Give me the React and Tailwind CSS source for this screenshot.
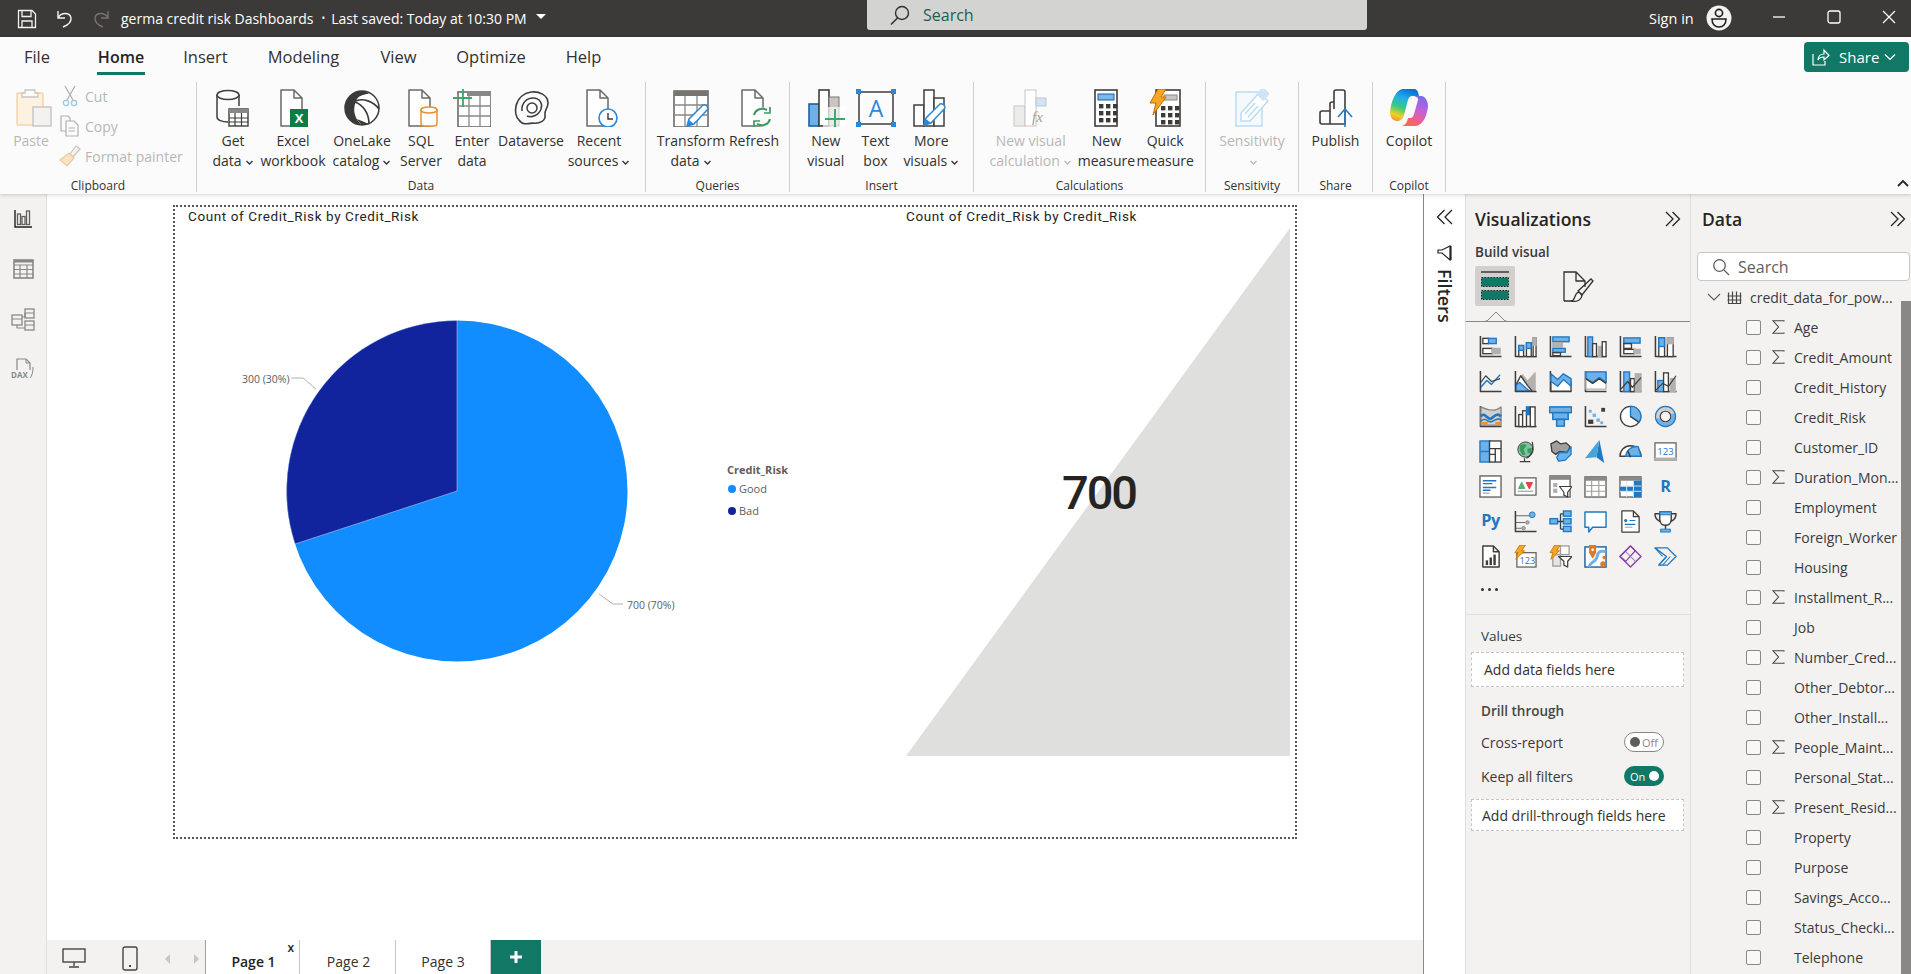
import React from "react";

const D = "#3f3e3c", B = "#1f78c1", L = "#6eb0e8", G = "#b3b0ad", W = "#ffffff", O = "#e8912d", GR = "#3c9a5f";

const R = (x, y, w, h, f = W, s = D, sw = 1.4) => <rect x={x} y={y} width={w} height={h} fill={f} stroke={s} strokeWidth={sw} />;
const P = (d, f = "none", s = D, sw = 1.4) => <path d={d} fill={f} stroke={s} strokeWidth={sw} strokeLinejoin="round" />;
const A = () => P("M1.5 1V22.5H23.5", "none", D, 1.6);

const Ico = ({ w = 38, h = 38, vb, children, className = "" }) => (
  <svg width={w} height={h} viewBox={vb || `0 0 ${w} ${h}`} className={`shrink-0 ${className}`}>{children}</svg>
);

const Chev = ({ c = "#3b3a39" }) => (
  <svg width="9" height="9" viewBox="0 0 9 9" className="inline-block ml-[3px] align-[-1px]">
    <path d="M1.5 3L4.5 6L7.5 3" fill="none" stroke={c} strokeWidth="1.3" />
  </svg>
);

const Doc = ({ c = D }) => P("M7 1H20L28 9V37H7Z M20 1V9H28", W, c, 1.5);

const GetData = () => (
  <Ico><path d="M3 6V28C3 31 8 33 14 33M25 6V17" fill="none" stroke={D} strokeWidth="1.5" /><ellipse cx="14" cy="6" rx="11" ry="4.6" fill="none" stroke={D} strokeWidth="1.5" />
    {R(15, 20, 19, 17, W, D, 1.4)}<rect x="15" y="20" width="19" height="4" fill="#8a8886" /><path d="M15 29H34M15 33H34M21 24V37M27.5 24V37" stroke={D} strokeWidth="1.2" /></Ico>
);
const Excel = () => (
  <Ico><Doc c="#6b6a68" /><rect x="16" y="20" width="18" height="18" fill="#107c41" /><text x="25" y="34" textAnchor="middle" fontSize="13" fontWeight="700" fill="#fff" fontFamily="Open Sans">X</text></Ico>
);
const OneLake = () => (
  <Ico><circle cx="19" cy="19" r="17" fill="#fff" stroke={D} strokeWidth="1.5" />
    <path d="M19 2C9 2 2 10 2 19C2 28 9 36 19 36C12 30 9 22 13 12C15 7 20 5 26 5C24 3 22 2 19 2Z" fill="#3b3a39" />
    <path d="M12 13C20 16 26 24 26 35M13 12C20 9 30 12 36 20" fill="none" stroke="#3b3a39" strokeWidth="1.6" /><path d="M26 35C24 36 22 36 19 36C17 34 15 32 14 30Z" fill="#3b3a39" /></Ico>
);
const Sql = () => (
  <Ico><Doc c="#6b6a68" /><rect x="19" y="19" width="16" height="18" rx="3" fill="#fff" stroke={O} strokeWidth="1.5" /><ellipse cx="27" cy="21" rx="8" ry="3" fill="#fff" stroke={O} strokeWidth="1.5" /></Ico>
);
const EnterData = () => (
  <Ico>{R(5, 3, 33, 35, W, "#6b6a68", 1.6)}<rect x="14" y="3" width="24" height="4" fill="#8a8886" /><path d="M5 17H38M5 27H38M16 7V38M27 7V38" stroke="#8a8886" strokeWidth="1.3" /><path d="M0 9H19M10 0V18" stroke="#3ea66b" strokeWidth="1.8" /></Ico>
);
const Dataverse = () => (
  <Ico><path d="M19 3C27 2 36 6 36 14C36 20 32 21 33 26C34 32 27 35 21 34C15 35 10 36 7 31C3 27 3 22 4 17C6 9 12 4 19 3Z" fill="none" stroke={D} strokeWidth="1.6" />
    <path d="M10 22C9 14 15 9 21 9C28 9 31 15 29 20C27 26 20 29 15 27" fill="none" stroke={D} strokeWidth="1.5" /><ellipse cx="20" cy="19" rx="5" ry="5" fill="none" stroke={D} strokeWidth="1.5" /></Ico>
);
const Recent = () => (
  <Ico><Doc c="#6b6a68" /><circle cx="28" cy="29" r="9" fill="#fff" stroke="#2b88d8" strokeWidth="1.6" /><path d="M28 24V30H33" fill="none" stroke="#3b3a39" strokeWidth="1.4" /></Ico>
);
const Pencil = ({ x = 0, y = 0 }) => (
  <g transform={`translate(${x} ${y})`}><path d="M1 22L3 15L17 1C19 0 22 2 22 5L8 20Z" fill="#fff" stroke="#2b88d8" strokeWidth="1.5" /><path d="M1 23L3 16L8 20Z" fill="#2b88d8" /></g>
);
const Transform = () => (
  <Ico>{R(2, 2, 34, 36, W, "#6b6a68", 1.6)}<rect x="2" y="2" width="34" height="5" fill="#77736f" /><path d="M2 16H36M2 26H36M13 7V38M25 7V38" stroke="#8a8886" strokeWidth="1.3" /><Pencil x="14" y="15" /></Ico>
);
const Refresh = () => (
  <Ico><Doc c="#6b6a68" /><circle cx="27" cy="28" r="9.5" fill="#fff" stroke="none" /><path d="M19 26C20 21 26 18 32 21M35 30C34 35 28 38 22 35" fill="none" stroke="#3c9a5f" strokeWidth="2" /><path d="M29 24H35V18M25 32H19V38" fill="none" stroke="#3c9a5f" strokeWidth="1.7" /></Ico>
);
const NewVisual = () => (
  <Ico>{R(2, 15, 10, 22, L, "#1f5f9e", 1.6)}{R(12, 1, 10, 36, W, D, 1.6)}<rect x="22" y="8" width="10" height="29" fill="#c8c6c4" stroke="#77736f" /><rect x="16" y="18" width="22" height="20" fill="#fff" opacity="0.65" /><path d="M18 30H38M28 20V40" stroke="#3ea66b" strokeWidth="1.9" /></Ico>
);
const TextBox = () => (
  <Ico w={40}><rect x="3" y="3" width="34" height="32" fill="none" stroke={D} strokeWidth="1.5" /><text x="20" y="28" textAnchor="middle" fontSize="23" fill="#2b88d8" fontFamily="Open Sans">A</text>
    <rect x="0" y="0" width="5" height="5" fill="#2b88d8" /><rect x="35" y="0" width="5" height="5" fill="#2b88d8" /><rect x="0" y="33" width="5" height="5" fill="#2b88d8" /><rect x="35" y="33" width="5" height="5" fill="#2b88d8" /></Ico>
);
const MoreVisuals = () => (
  <Ico>{R(2, 16, 10, 21, W, D, 1.5)}{R(12, 1, 10, 36, W, D, 1.5)}{R(22, 9, 10, 28, W, D, 1.5)}<Pencil x="11" y="14" /></Ico>
);
const NewCalc = () => (
  <Ico><rect x="2" y="17" width="11" height="20" fill="#ececea" stroke="#c8c6c4" /><rect x="13" y="1" width="11" height="36" fill="#fff" stroke="#c8c6c4" /><rect x="24" y="9" width="10" height="8" fill="#cfe4f7" stroke="#c8c6c4" /><text x="20" y="33" fontSize="15" fontStyle="italic" fontFamily="Liberation Serif" fill="#a19f9d">fx</text></Ico>
);
const Keys = ({ y = 0, x = 0 }) => (
  <g fill="#3b3a39" transform={`translate(${x} ${y})`}>{[0, 7, 14].map((dy) => [0, 7, 14].map((dx) => <rect key={`${dx}${dy}`} x={dx} y={dy} width="4.4" height="4.4" />))}</g>
);
const Measure = () => (
  <Ico w={24} vb="0 0 24 38"><rect x="1" y="1" width="22" height="36" fill="#fff" stroke={D} strokeWidth="1.6" /><rect x="4" y="5" width="16" height="6" fill="#7db8ea" stroke="#1f5f9e" /><Keys x={5} y={15} /></Ico>
);
const QuickMeasure = () => (
  <Ico w={32} vb="0 0 32 38"><rect x="7" y="1" width="24" height="36" fill="#fff" stroke={D} strokeWidth="1.6" /><rect x="15" y="6" width="13" height="5" fill="#c8c6c4" stroke="#8a8886" /><Keys x={12} y={17} /><path d="M9 0H17L12 8H17L4 26L7 14H1Z" fill="#f5a623" stroke="#c96a00" strokeWidth="1" /></Ico>
);
const Sensitivity = () => (
  <Ico w={34} vb="0 0 34 38"><rect x="1" y="3" width="26" height="34" fill="#f3f9fd" stroke="#bcdcf2" strokeWidth="1.5" /><path d="M6 24L24 4L33 12L15 32L6 32Z" fill="#fff" stroke="#bcdcf2" strokeWidth="1.5" /><path d="M10 25L20 14M13 28L23 17" stroke="#bcdcf2" strokeWidth="1.5" /><rect x="23" y="0" width="10" height="10" fill="#cfe4f7" transform="rotate(42 28 5)" /></Ico>
);
const Publish = () => (
  <Ico w={34} vb="0 0 34 38"><path d="M1 24C1 23 2 22 3 22H11V15C11 14 12 13 13 13H15V3C15 2 16 1 17 1H24C25 1 26 2 26 3V35H3C2 35 1 34 1 33Z M11 22V35 M15 13V20" fill="#fbfbfb" stroke={D} strokeWidth="1.6" /><path d="M26 43V20M19 28L26 20L33 28" fill="none" stroke="#2b7cb8" strokeWidth="1.6" /></Ico>
);
const Copilot = () => (
  <Ico w={38} h={40}>
    <defs>
      <linearGradient id="cpA" x1="0.6" y1="0" x2="0.3" y2="1"><stop offset="0" stopColor="#0f6fd6" /><stop offset="0.3" stopColor="#1fb0e8" /><stop offset="0.6" stopColor="#3cc97f" /><stop offset="0.85" stopColor="#f3d023" /><stop offset="1" stopColor="#f39a2b" /></linearGradient>
      <linearGradient id="cpB" x1="0.7" y1="0" x2="0.3" y2="1"><stop offset="0" stopColor="#7a6be8" /><stop offset="0.4" stopColor="#c060dc" /><stop offset="0.75" stopColor="#ef5f8e" /><stop offset="1" stopColor="#f6703a" /></linearGradient>
    </defs>
    <path d="M12 1H24C27 1 28 3 29 8L22 8C20 8 19 9 18 12L14 27C13 31 10 33 7 33C3 33 0 29 0 24C1 14 5 3 12 1Z" fill="url(#cpA)" />
    <path d="M22 8H31C35 8 38 13 38 18C37 28 33 37 26 38H12C15 37 17 35 18 30H20C22 30 23 29 24 26L28 12C28.5 10 26 8 22 8Z" fill="url(#cpB)" />
  </Ico>
);

const gallery = [
  <><A />{R(4, 3.5, 6, 5.5)}{R(10, 3.5, 8, 5.5, L, B)}{R(4, 14, 10, 5.5)}{R(14, 14, 8, 5.5, G, G)}</>,
  <><A />{R(5, 11, 5, 11.5, W)}{R(5, 11, 5, 5, L, B)}{R(13, 8, 5, 14.5, W)}{R(13, 8, 5, 6, L, B)}{R(20, 3, 3, 19.5, W)}{R(20, 3, 3, 8, G, G)}</>,
  <><A />{R(4, 2, 17, 5, L, B)}{R(4, 8, 10, 4.5, G, G)}{R(4, 14, 13, 4, L, B)}{R(4, 18.5, 8, 3, W)}</>,
  <><A />{R(4, 2, 5, 20.5, L, B)}{R(9, 9, 4, 13.5, W)}{R(15, 12, 4, 10.5, G, G)}{R(19, 7, 4, 15.5, W)}</>,
  <><A />{R(5, 3, 17, 5.5, L, B)}{R(5, 9, 8, 5, W)}{R(5, 15, 11, 4.5, W)}{R(16, 15, 6, 4.5, G, G)}</>,
  <><A />{R(5, 3, 6, 19.5, W)}{R(5, 3, 6, 9, L, B)}{R(14, 3, 6, 19.5, W)}{R(14, 3, 6, 6, G, G)}</>,
  <><A />{P("M2 18L8 11L13 15L22 5", "none", B, 1.5)}{P("M2 13L7 6L13 12L22 9", "none", D, 1.2)}</>,
  <>{P("M2 22V15L9 5L14 12L22 3V22Z", G, G)}{P("M2 22V16L7 6L14 16L19 22Z", W, D)}{P("M2 22V16L6 13L16 22Z", L, B)}<A /></>,
  <><A />{P("M2 7L9 13L15 6L23 12V22H2Z", W, D)}{P("M2 4L9 10L15 4L23 9V17L15 10L9 17L2 12Z", L, B)}</>,
  <><A />{P("M2 2H23V20H2Z", W, G)}{P("M2 2H23V13L16 8L9 13L2 9Z", L, B)}{P("M2 9L9 14L16 9L23 14", "none", D)}</>,
  <><A />{R(5, 2, 6, 20.5, L, B)}{R(12, 9, 4, 13.5, W)}{R(17, 4, 6, 18.5, G, G)}{P("M2 20L9 12L14 18L23 8", "none", D, 1.3)}</>,
  <><A />{R(4, 11, 6, 11.5, L, B)}{R(10, 3, 5, 19.5, W)}{R(17, 9, 5, 13.5, G, G)}{P("M2 21L9 14L15 17L23 6", "none", D, 1.3)}</>,
  <><A />{P("M2 2C8 5 16 8 23 2V21H2Z", "#d2d0ce", "#8a8886")}{P("M2 12C6 6 9 17 13 14C17 11 19 8 23 12", "none", B, 2.8)}{P("M3 19H9M17 19H23", "none", O, 2.5)}{P("M2 17C7 11 9 20 14 17C18 15 20 13 23 16", "none", B, 1.6)}</>,
  <><A />{R(5, 10, 4, 12.5, W)}{R(9, 6, 4, 16.5, W)}{R(13, 2, 4, 8, B, B)}{R(17, 2, 5, 20.5, W)}</>,
  <>{R(0.5, 2, 23, 6, L, B, 1.6)}{R(4, 8, 16, 7, L, B, 1.6)}{R(8, 15, 8, 7, L, B, 1.6)}</>,
  <><A />{R(5, 16, 4, 3, D, D)}<rect x="9" y="9" width="3.5" height="3.5" fill={L} /><rect x="13" y="14" width="3.5" height="3.5" fill={L} /><rect x="17" y="17" width="3" height="3" fill={L} /><rect x="18" y="3" width="4" height="4" fill={D} /><rect x="5" y="5" width="3" height="3" fill={L} /></>,
  <><circle cx="12" cy="12" r="10.5" fill={W} stroke={D} strokeWidth="1.4" />{P("M12 12V1.5A10.5 10.5 0 0 1 21 18Z", L, B)}{P("M12 12L21 18", "none", D)}</>,
  <><circle cx="12" cy="12" r="8.5" fill="none" stroke={L} strokeWidth="4.5" /><path d="M12 1.5A10.5 10.5 0 0 1 22 8L17 10A5.5 5.5 0 0 0 12 6.5Z" fill="#d2d0ce" /><path d="M2 14A10.5 10.5 0 0 1 12 1.5V6.5A5.5 5.5 0 0 0 6.6 14Z" fill="#d2d0ce" /><circle cx="12" cy="12" r="10.5" fill="none" stroke={B} strokeWidth="1.2" /><circle cx="12" cy="12" r="5.5" fill="none" stroke={D} strokeWidth="1.2" /></>,
  <>{R(1, 1, 10, 22, L, B)}{P("M1 12H11", "none", B)}{R(11, 1, 12, 22, W, D)}{P("M11 9H23M17 9V23M11 15H17", "none", D)}</>,
  <><circle cx="12" cy="10" r="8" fill="#7fc2a0" stroke={D} /><path d="M6 6C9 4 12 4 13 6L10 10L12 15L9 16L6 11Z" fill={GR} /><path d="M14 9L19 8L17 14L14 13Z" fill={GR} />{P("M19 2C21 9 19 16 13 19M11 19V22M6 22.5H17", "none", D, 1.3)}</>,
  <>{P("M2 4L8 1L12 4L18 3L22 7L19 13L11 12L7 15L3 12Z", "#a19f9d", D)}{P("M11 13L19 13L23 7V15L17 21L10 22L8 18Z", L, B)}</>,
  <><path d="M16 0L21 24L13 18Z" fill="#1f78c1" /><path d="M16 0L1 19L13 18Z" fill="#4aa3d8" /></>,
  <>{P("M1 17A11 11 0 0 1 23 17L21 17H3Z", W, D)}{P("M7 17A11 11 0 0 1 20 7L23 17Z", L, B)}{P("M12 18L9 11", "none", D, 1.6)}</>,
  <>{R(1, 3, 22, 18, W, "#6b6a68", 1.4)}{R(1, 19, 22, 2, G, G)}<text x="12" y="16" textAnchor="middle" fontSize="10" fill={B} fontFamily="Open Sans">123</text></>,
  <>{R(1, 1, 22, 22, W, "#6b6a68", 1.5)}{P("M4 6H18M4 9H14M4 13H18M4 16H12", "none", B, 1.5)}{P("M4 19H11", "none", G, 1.5)}</>,
  <>{R(1, 3, 22, 18, W, "#6b6a68", 1.4)}{P("M5 14L8 8L11 14Z", "#5bb07a", "#5bb07a")}{P("M13 8H19L16 14Z", "#e0474c", "#e0474c")}{P("M4 17H20", "none", G, 1.5)}</>,
  <>{R(1, 1, 21, 22, W, "#6b6a68", 1.5)}<rect x="1" y="1" width="21" height="4" fill="#8a8886" />{R(5, 9, 3, 3, G, G)}{R(5, 15, 3, 3, G, G)}{P("M11 12H24L19.5 18V23L15.5 21V18Z", W, D, 1.3)}</>,
  <>{R(1, 2, 22, 21, W, "#6b6a68", 1.5)}<rect x="1" y="2" width="22" height="4" fill="#8a8886" />{P("M1 11H23M1 17H23M8 6V23M15.5 6V23", "none", "#a19f9d", 1.2)}</>,
  <>{R(1, 2, 22, 21, W, "#6b6a68", 1.5)}<rect x="1" y="2" width="22" height="4" fill="#8a8886" /><rect x="15" y="6" width="8" height="17" fill={B} /><rect x="1" y="12" width="14" height="5" fill={B} /><rect x="8" y="7" width="6.5" height="4.5" fill="#fff" />{P("M1 11.5H23M1 17H23M8 6V23M15 6V23", "none", "#dfe6ee", 1)}</>,
  <text x="12" y="18" textAnchor="middle" fontSize="17" fontWeight="700" fill={B} fontFamily="Open Sans">R</text>,
  <text x="12" y="17" textAnchor="middle" fontSize="17" fontWeight="700" fill={B} fontFamily="Open Sans" letterSpacing="-0.5">Py</text>,
  <><A />{P("M2 6H17M2 13H12M2 19H8", "none", "#6b6a68", 1.2)}<circle cx="19" cy="5" r="3" fill={L} stroke={B} /><circle cx="14" cy="13" r="1.8" fill={G} stroke="#8a8886" /><circle cx="10" cy="19" r="1.8" fill={G} stroke="#8a8886" /></>,
  <>{R(1, 9, 8, 5.5, L, B)}{R(15, 1, 8, 5.5, L, B)}{R(15, 9, 8, 5.5, L, B)}{R(15, 17, 8, 5.5, L, B)}{P("M9 12H15M12 4V20M12 4H15M12 20H15", "none", D)}</>,
  <>{P("M1 2H23V18H9L5 23V18H1Z", W, B, 1.5)}</>,
  <>{P("M3 1H15L21 7V23H3Z M15 1V7H21", W, D, 1.3)}<circle cx="7" cy="11" r="1.7" fill={B} />{P("M11 11H17M6 15H17", "none", B, 1.2)}{P("M6 18H14", "none", G, 1.2)}</>,
  <>{P("M6 2H18V10C18 14 15 16 12 16C9 16 6 14 6 10Z", W, D, 1.5)}<rect x="6" y="2" width="12" height="3" fill={L} stroke={B} />{P("M6 4H1C1 9 3 11 7 12M18 4H23C23 9 21 11 17 12M12 16V20", "none", D, 1.5)}<rect x="7" y="20" width="10" height="3" fill={L} stroke={B} /></>,
  <>{P("M4 1H15L21 7V23H4Z M15 1V7H21", W, D, 1.5)}<rect x="7" y="16" width="2.5" height="5" fill={D} /><rect x="11" y="13" width="2.5" height="8" fill={D} /><rect x="15" y="10" width="2.5" height="11" fill={D} /></>,
  <>{R(3, 8, 20, 15, W, "#6b6a68", 1.4)}<text x="14" y="20" textAnchor="middle" fontSize="9.5" fill={B} fontFamily="Open Sans">123</text>{P("M6 0H12L8 6H11L2 15L4 8H1Z", "#f5a623", "#c96a00", 0.8)}</>,
  <>{R(4, 10, 8, 12, "#e6e5e3", "#a19f9d")}{R(12, 1, 9, 9, W, "#a19f9d")}{P("M10 12H24L19.5 17V23L15.5 21V17Z", W, D, 1.3)}{P("M6 0H12L8 6H11L2 15L4 8H1Z", "#f5a623", "#c96a00", 0.8)}</>,
  <>{R(1, 2, 22, 21, W, "#1f5f9e", 1.5)}{P("M5 23C8 15 13 19 14 11C15 6 19 6 23 7", "none", L, 3)}{P("M6 0H12V8L9 13L6 8Z", "#e07a22", "#e07a22")}<circle cx="9" cy="5" r="1.4" fill="#fff" /><circle cx="20" cy="20" r="3" fill="#e07a22" /><circle cx="21" cy="13" r="1.8" fill="#e07a22" /></>,
  <>{P("M12 1L23 12L12 23L1 12Z", "none", "#8a3ea8", 1.4)}{P("M12 1L17 6L7 17L1 12Z", "none", "#8a3ea8", 1.2)}{P("M7 7L17 17", "none", "#b27bc8", 1.2)}</>,
  <>{P("M1 3H14L23 12L14 21H5L13 12Z", "none", B, 1.4)}{P("M5 21L13 12M9 21L17 12M1 3L9 12", "none", B, 1.1)}</>,
];

const Btn = ({ w, icon, l1, l2, chev, faded }) => (
  <div className={`flex flex-col items-center ${w}`}>
    <div className="h-[38px] mt-[7px] flex items-center justify-center">{icon}</div>
    <div className={`mt-[4px] leading-[20px] text-[14px] whitespace-nowrap text-center ${faded ? "text-[#b9b7b5]" : "text-[#323130]"}`}>
      <div>{l1}</div>
      <div>{l2}{chev && <Chev c={faded ? "#b9b7b5" : "#323130"} />}</div>
    </div>
  </div>
);

const Group = ({ w, label, children }) => (
  <div className={`${w} h-[110px] flex flex-col border-r border-[#d2d0ce]`}>
    <div className="flex-1 flex min-h-0">{children}</div>
    <div className="h-[16px] mb-[-2px] leading-[16px] text-[12px] text-center text-[#323130]">{label}</div>
  </div>
);

const SmallCmd = ({ icon, text }) => (
  <div className="h-[30px] flex items-center text-[14px] text-[#b9b7b5] whitespace-nowrap">
    <div className="w-[26px] flex justify-center">{icon}</div><span className="ml-[2px]">{text}</span>
  </div>
);

const Clipboard = () => (
  <div className="flex w-full">
    <div className="w-[62px] flex flex-col items-center">
      <div className="h-[38px] mt-[7px] ml-[6px]">
        <Ico w={36} vb="0 0 36 38"><rect x="1" y="4" width="26" height="32" rx="1" fill="#fdf1e0" stroke="#f3d4ac" strokeWidth="1.5" /><path d="M9 4V1H19V4H22V8H6V4Z" fill="#fbfbfb" stroke="#c8c6c4" strokeWidth="1.3" /><rect x="17" y="18" width="18" height="19" fill="#f3f2f1" stroke="#c8c6c4" strokeWidth="1.5" /></Ico>
      </div>
      <div className="mt-[4px] leading-[20px] text-[14px] text-[#b9b7b5]">Paste</div>
    </div>
    <div className="ml-[-5px] mt-[-1px]">
      <SmallCmd text="Cut" icon={<Ico w={16} h={22} vb="0 0 16 22"><path d="M3 1L11 15M13 1L5 15" stroke="#b3b0ad" strokeWidth="1.3" fill="none" /><circle cx="4" cy="18" r="2.6" fill="none" stroke="#9cc6ea" strokeWidth="1.3" /><circle cx="12" cy="18" r="2.6" fill="none" stroke="#9cc6ea" strokeWidth="1.3" /></Ico>} />
      <SmallCmd text="Copy" icon={<Ico w={20} h={22} vb="0 0 20 22"><path d="M1 1H8L10 3V16H1Z" fill="#fbfbfb" stroke="#b3b0ad" strokeWidth="1.2" /><path d="M6 6H14L18 10V21H6Z M8.5 13H15M8.5 16H15" fill="#fbfbfb" stroke="#b3b0ad" strokeWidth="1.2" /></Ico>} />
      <SmallCmd text="Format painter" icon={<Ico w={22} h={22} vb="0 0 22 22"><path d="M11 9L17 1L21 4L14 12Z" fill="#f3f2f1" stroke="#c8c6c4" strokeWidth="1.2" /><path d="M1 15L10 8L15 13L8 21Z" fill="#fbe3c4" stroke="#f0c898" strokeWidth="1.2" /></Ico>} />
    </div>
  </div>
);

const RibbonRow = () => (
  <div className="flex h-[110px]">
    <Group w="w-[197px]" label="Clipboard"><Clipboard /></Group>
    <Group w="w-[449px]" label="Data">
      <Btn w="w-[72px]" icon={<GetData />} l1="Get" l2="data" chev />
      <Btn w="w-[48px]" icon={<Excel />} l1="Excel" l2="workbook" />
      <Btn w="w-[90px]" icon={<OneLake />} l1="OneLake" l2="catalog" chev />
      <Btn w="w-[28px]" icon={<Sql />} l1="SQL" l2="Server" />
      <Btn w="w-[74px]" icon={<EnterData />} l1="Enter" l2="data" />
      <Btn w="w-[44px]" icon={<Dataverse />} l1="Dataverse" l2="" />
      <Btn w="w-[92px]" icon={<Recent />} l1="Recent" l2="sources" chev />
    </Group>
    <Group w="w-[144px]" label="Queries">
      <Btn w="w-[90px]" icon={<Transform />} l1="Transform" l2="data" chev />
      <Btn w="w-[36px]" icon={<Refresh />} l1="Refresh" l2="" />
    </Group>
    <Group w="w-[184px]" label="Insert">
      <Btn w="w-[72px]" icon={<NewVisual />} l1="New" l2="visual" />
      <Btn w="w-[28px]" icon={<TextBox />} l1="Text" l2="box" />
      <Btn w="w-[84px]" icon={<MoreVisuals />} l1="More" l2="visuals" chev />
    </Group>
    <Group w="w-[232px]" label="Calculations">
      <Btn w="w-[114px]" faded icon={<NewCalc />} l1="New visual" l2="calculation" chev />
      <Btn w="w-[38px]" icon={<Measure />} l1="New" l2="measure" />
      <Btn w="w-[80px]" icon={<QuickMeasure />} l1="Quick" l2="measure" />
    </Group>
    <Group w="w-[93px]" label="Sensitivity">
      <Btn w="w-[93px]" faded icon={<Sensitivity />} l1="Sensitivity" l2="" chev />
    </Group>
    <Group w="w-[74px]" label="Share"><Btn w="w-[74px]" icon={<Publish />} l1="Publish" l2="" /></Group>
    <Group w="w-[73px]" label="Copilot"><Btn w="w-[73px]" icon={<Copilot />} l1="Copilot" l2="" /></Group>
    <div className="flex-1 flex justify-end items-end pr-[1px] pb-[2px]">
      <svg width="14" height="14" viewBox="0 0 14 14"><path d="M2 10L7 5L12 10" fill="none" stroke="#252423" strokeWidth="1.8" /></svg>
    </div>
  </div>
);

const Tab = ({ cls, active, children }) => (
  <div className={`${cls} relative h-[45px] leading-[40px] text-center whitespace-nowrap flex justify-center ${active ? "text-[16px] font-semibold text-[#252423]" : "text-[16.5px] text-[#323130]"}`}>
    {children}
    {active && <div className="absolute left-0 right-0 top-[35px] h-[3px] bg-[#117865]" />}
  </div>
);

const TitleBar = () => (
  <div className="h-[37px] bg-[#3b3a38] flex text-white shrink-0">
    <div className="w-[867px] flex items-center">
      <svg width="20" height="20" viewBox="0 0 20 20" className="ml-[17px]"><path d="M1.5 1.5H15L18.5 5V18.5H1.5Z M5 1.5V7.5H14V1.5 M5 18.5V12H15V18.5" fill="none" stroke="#f3f2f1" strokeWidth="1.3" /></svg>
      <svg width="20" height="20" viewBox="0 0 20 20" className="ml-[17px]"><path d="M4 2V9H11M4 9C7 3 16 3 17 9C17.5 13 14 16 9 18" fill="none" stroke="#f3f2f1" strokeWidth="1.4" /></svg>
      <svg width="20" height="20" viewBox="0 0 20 20" className="ml-[18px]"><path d="M16 2V9H9M16 9C13 3 4 3 3 9C2.5 13 6 16 11 18" fill="none" stroke="#77736f" strokeWidth="1.4" /></svg>
      <span className="ml-[9px] text-[14px] whitespace-nowrap">germa credit risk Dashboards</span>
      <span className="ml-[8px] text-[10px]">•</span>
      <span className="ml-[6px] text-[14px] whitespace-nowrap">Last saved: Today at 10:30 PM</span>
      <svg width="12" height="8" viewBox="0 0 12 8" className="ml-[8px] mb-[4px]"><path d="M1 1H11L6 6Z" fill="#fff" /></svg>
    </div>
    <div className="w-[500px] h-[30px] bg-[#d3d3d1] rounded-b-[3px] flex items-center">
      <svg width="22" height="22" viewBox="0 0 22 22" className="ml-[22px]"><circle cx="13" cy="9" r="6.5" fill="none" stroke="#323130" strokeWidth="1.4" /><path d="M8.5 14L2 20.5" stroke="#323130" strokeWidth="1.6" /></svg>
      <span className="ml-[12px] text-[16px] text-[#1c5d55]">Search</span>
    </div>
    <div className="flex-1 flex items-center">
      <span className="ml-[282px] w-[46px] text-[14.5px] whitespace-nowrap">Sign in</span>
      <svg width="26" height="30" viewBox="0 0 26 30" className="ml-[11px] mb-[2px]"><circle cx="13" cy="15" r="12.5" fill="#f3f2f1" /><circle cx="13" cy="10" r="3.6" fill="none" stroke="#201f1e" strokeWidth="1.6" /><path d="M6 16H20C20 21 17 24 13 24C9 24 6 21 6 16Z" fill="#f3f2f1" stroke="#201f1e" strokeWidth="1.6" /></svg>
      <svg width="14" height="14" viewBox="0 0 14 14" className="ml-[40px] mb-[3px]"><path d="M1 7H13" stroke="#fff" strokeWidth="1.3" /></svg>
      <svg width="14" height="16" viewBox="0 0 14 16" className="ml-[41px] mb-[3px]"><rect x="1" y="2" width="12" height="12" rx="2" fill="none" stroke="#fff" strokeWidth="1.3" /></svg>
      <svg width="14" height="14" viewBox="0 0 14 14" className="ml-[41px] mb-[3px]"><path d="M1 1L13 13M13 1L1 13" stroke="#fff" strokeWidth="1.3" /></svg>
    </div>
  </div>
);

const Ribbon = () => (
  <div className="relative z-10 h-[157px] bg-[#fbfbfb] shrink-0 shadow-[0_1px_4px_rgba(0,0,0,0.18)]">
    <div className="flex h-[45px]">
      <Tab cls="ml-[24px] w-[26px]">File</Tab>
      <Tab cls="ml-[47px] w-[48px]" active>Home</Tab>
      <Tab cls="ml-[39px] w-[43px]">Insert</Tab>
      <Tab cls="ml-[40px] w-[73px]">Modeling</Tab>
      <Tab cls="ml-[40px] w-[37px]">View</Tab>
      <Tab cls="ml-[39px] w-[70px]">Optimize</Tab>
      <Tab cls="ml-[40px] w-[35px]">Help</Tab>
      <div className="ml-auto mr-[2px] mt-[5px] w-[105px] h-[30px] rounded-[4px] bg-[#117865] flex items-center text-white text-[15px]">
        <svg width="18" height="18" viewBox="0 0 18 18" className="ml-[8px]"><path d="M1 6V17H13V13M6 12C6 8 9 6 12 6V2L17 7.5L12 12V9C9 9 7 10 6 12Z" fill="none" stroke="#fff" strokeWidth="1.2" /></svg>
        <span className="ml-[9px]">Share</span>
        <svg width="12" height="10" viewBox="0 0 12 10" className="ml-[5px]"><path d="M1 2.5L6 7.5L11 2.5" fill="none" stroke="#fff" strokeWidth="1.2" /></svg>
      </div>
    </div>
    <RibbonRow />
  </div>
);

const Rail = () => (
  <div className="w-[47px] shrink-0 bg-[#f3f2f1] border-r border-[#e1dfdd] flex flex-col items-center">
    <div className="h-[50px] flex items-center">
      <svg width="18" height="18" viewBox="0 0 18 18"><path d="M1 0V17H18" fill="none" stroke="#201f1e" strokeWidth="1.4" /><rect x="3.5" y="4" width="3" height="10.5" fill="none" stroke="#605e5c" strokeWidth="1.3" /><rect x="8" y="6.5" width="3" height="8" fill="none" stroke="#605e5c" strokeWidth="1.3" /><rect x="12.5" y="1" width="3" height="13.5" fill="none" stroke="#605e5c" strokeWidth="1.3" /></svg>
    </div>
    <div className="h-[50px] flex items-center">
      <svg width="21" height="20" viewBox="0 0 21 20"><rect x="1" y="1" width="19" height="18" fill="none" stroke="#8a8886" strokeWidth="1.6" /><path d="M1 6H20M1 10.5H20M1 15H20M7 6V19M14 6V19" stroke="#8a8886" strokeWidth="1.2" /><rect x="1" y="1" width="19" height="2.5" fill="#8a8886" /></svg>
    </div>
    <div className="h-[50px] flex items-center">
      <svg width="24" height="23" viewBox="0 0 24 23"><rect x="1" y="7" width="10" height="10" fill="none" stroke="#8a8886" strokeWidth="1.3" /><rect x="14" y="1" width="9" height="9" fill="none" stroke="#8a8886" strokeWidth="1.3" /><rect x="14" y="13" width="9" height="9" fill="none" stroke="#8a8886" strokeWidth="1.3" /><path d="M1 11H11M14 5H23M14 17H23M11 9H14V5M6 17V20H14" fill="none" stroke="#8a8886" strokeWidth="1.2" /></svg>
    </div>
    <div className="h-[50px] flex items-center">
      <svg width="24" height="22" viewBox="0 0 24 22"><path d="M6 12V1H15L19 5V12" fill="none" stroke="#8a8886" strokeWidth="1.2" /><path d="M15 1V5H19M22 9C22 14 21 18 19 20" fill="none" stroke="#8a8886" strokeWidth="1" /><text x="0" y="20" fontSize="8" fontWeight="700" fill="#8a8886" fontFamily="Open Sans">DAX</text></svg>
    </div>
  </div>
);

const Bottom = () => (
  <div className="h-[34px] shrink-0 bg-[#f3f2f1] flex">
    <div className="w-[159px] flex items-center border-r border-[#a19f9d]">
      <svg width="24" height="22" viewBox="0 0 24 22" className="ml-[15px] mt-[2px]"><rect x="1" y="2" width="22" height="13" fill="none" stroke="#484644" strokeWidth="1.4" /><path d="M12 15V19M7 20H17" stroke="#484644" strokeWidth="1.4" /></svg>
      <svg width="16" height="25" viewBox="0 0 16 25" className="ml-[36px] mt-[2px]"><rect x="1" y="1" width="14" height="23" rx="2" fill="none" stroke="#484644" strokeWidth="1.4" /><rect x="7" y="19" width="2" height="2" fill="#484644" /></svg>
      <svg width="8" height="12" viewBox="0 0 8 12" className="ml-[26px] mt-[3px]"><path d="M6 1L1 6L6 11Z" fill="#c8c6c4" /></svg>
      <svg width="8" height="12" viewBox="0 0 8 12" className="ml-[20px] mt-[3px]"><path d="M2 1L7 6L2 11Z" fill="#c8c6c4" /></svg>
    </div>
    <div className="relative w-[94px] bg-white border-r border-[#c8c6c4] flex items-center justify-center pt-[9px] pl-[2px] text-[14px] font-semibold text-[#252423]">
      Page 1
      <span className="absolute right-[5px] top-[1px] text-[12px] leading-[14px] font-semibold">x</span>
    </div>
    <div className="w-[96px] bg-white border-r border-[#c8c6c4] flex items-center justify-center pt-[9px] pl-[2px] text-[14px] text-[#323130]">Page 2</div>
    <div className="w-[95px] bg-white border-r border-[#c8c6c4] flex items-center justify-center pt-[9px] text-[14px] text-[#323130]">Page 3</div>
    <div className="w-[50px] bg-[#117865] flex items-center justify-center">
      <svg width="16" height="16" viewBox="0 0 16 16"><path d="M8 2V14M2 8H14" stroke="#fff" strokeWidth="3" /></svg>
    </div>
  </div>
);

const Report = () => (
  <div className="ml-[126px] mt-[11px] w-[1124px] h-[634px] border-2 border-dotted border-[#555] flex">
    <div className="w-[731px] flex flex-col">
      <div className="h-[18px] pl-[13px] leading-[18px] text-[13.5px] text-[#252423] whitespace-nowrap font-['Roboto',sans-serif] tracking-[0.6px]">Count of Credit_Risk by Credit_Risk</div>
      <svg width="731" height="600" viewBox="0 0 731 600" className="block">
        <circle cx="282" cy="266" r="170.5" fill="#118dff" />
        <path d="M282 266L120 319A170.5 170.5 0 0 1 282 95.5Z" fill="#12239e" stroke="#fff" strokeWidth="0.4" />
        <path d="M116 153H128L141 164" fill="none" stroke="#b3b0ad" strokeWidth="1" />
        <path d="M424 369L438 379H448" fill="none" stroke="#b3b0ad" strokeWidth="1" />
        <text x="67" y="158" fontSize="10.5" fill="#605e5c" fontFamily="Open Sans">300 (30%)</text>
        <text x="452" y="384" fontSize="10.5" fill="#605e5c" fontFamily="Open Sans">700 (70%)</text>
        <text x="552" y="249" fontSize="11" fontWeight="700" fill="#605e5c" fontFamily="Open Sans">Credit_Risk</text>
        <circle cx="557" cy="264" r="4" fill="#118dff" />
        <text x="564" y="268" fontSize="11" fill="#605e5c" fontFamily="Open Sans">Good</text>
        <circle cx="557" cy="286" r="4" fill="#12239e" />
        <text x="564" y="290" fontSize="11" fill="#605e5c" fontFamily="Open Sans">Bad</text>
      </svg>
    </div>
    <div className="flex-1 flex flex-col">
      <div className="h-[18px] leading-[18px] text-[13.5px] text-[#252423] whitespace-nowrap font-['Roboto',sans-serif] tracking-[0.6px]">Count of Credit_Risk by Credit_Risk</div>
      <svg width="389" height="600" viewBox="0 0 389 600" className="block">
        <path d="M384 3V531H0Z" fill="#dfdfdd" />
        <text x="193" y="284" textAnchor="middle" fontSize="47" fontWeight="500" fill="#252423" letterSpacing="-2" fontFamily="Roboto">700</text>
      </svg>
    </div>
  </div>
);

const Filters = () => (
  <div className="w-[42px] shrink-0 bg-white border-l border-[#8a8886] flex flex-col items-center">
    <svg width="18" height="16" viewBox="0 0 18 16" className="mt-[15px]"><path d="M8.5 1L1.5 8L8.5 15M16 1L9 8L16 15" fill="none" stroke="#252423" strokeWidth="1.3" /></svg>
    <svg width="16" height="16" viewBox="0 0 16 16" className="mt-[20px]"><path d="M1 5H5L13 1V15L5 8H1Z M14 1V15" fill="none" stroke="#252423" strokeWidth="1.2" /></svg>
    <div className="mt-[8px] [writing-mode:vertical-rl] text-[18px] font-semibold text-[#252423] leading-[20px]">Filters</div>
  </div>
);

const Toggle = ({ on }) => on ? (
  <div className="w-[40px] h-[20px] rounded-full bg-[#117865] flex items-center justify-between pl-[6px] pr-[5px] text-[11px] text-white leading-none"><span>On</span><span className="w-[10px] h-[10px] rounded-full bg-white" /></div>
) : (
  <div className="w-[40px] h-[20px] rounded-full border border-[#8a8886] bg-white flex items-center pl-[5px] text-[11px] text-[#8a8886] leading-none"><span className="w-[10px] h-[10px] rounded-full bg-[#605e5c]" /><span className="ml-[2px]">Off</span></div>
);

const Viz = () => (
  <div className="w-[226px] shrink-0 bg-[#f3f2f1] border-l border-[#e1dfdd] border-r flex flex-col">
    <div className="h-[50px] flex items-center justify-between pl-[9px] pr-[9px]">
      <span className="text-[17.5px] font-semibold text-[#252423]">Visualizations</span>
      <svg width="17" height="16" viewBox="0 0 17 16"><path d="M2 1L9 8L2 15M8.5 1L15.5 8L8.5 15" fill="none" stroke="#252423" strokeWidth="1.3" /></svg>
    </div>
    <div className="h-[16px] pl-[9px] leading-[16px] text-[13.5px] font-semibold text-[#3b3a39]">Build visual</div>
    <div className="mt-[6px] flex pl-[9px]">
      <div className="w-[40px] h-[40px] bg-[#d2d0ce] rounded-[2px] flex items-center justify-center">
        <svg width="30" height="30" viewBox="0 0 30 30"><path d="M1 1H29" stroke="#252423" strokeWidth="1.3" /><rect x="1.5" y="6.5" width="27" height="9" fill="#117865" stroke="#252423" strokeDasharray="1.5 1.5" /><rect x="1.5" y="19.5" width="27" height="9" fill="#117865" stroke="#252423" strokeDasharray="1.5 1.5" /></svg>
      </div>
      <svg width="32" height="32" viewBox="0 0 32 32" className="ml-[47px] mt-[5px]"><path d="M2 30V1H14L23 10V16M14 1V10H23M2 30H10" fill="none" stroke="#323130" strokeWidth="1.3" /><path d="M16 20L29 8L31 10L20 24Z" fill="none" stroke="#323130" strokeWidth="1.3" /><path d="M9 30C13 30 12 25 15 22C18 20 21 24 19 27C17 30 13 31 9 30Z" fill="none" stroke="#323130" strokeWidth="1.3" /></svg>
    </div>
    <div className="relative mt-[15px] h-[1px] bg-[#8a8886]">
      <svg width="22" height="10" viewBox="0 0 22 10" className="absolute left-[19px] top-[-10px]"><path d="M0 10H2L11 1L20 10H22" fill="#f3f2f1" stroke="#8a8886" strokeWidth="1" /></svg>
    </div>
    <div className="pt-[7px] pl-[7px] grid grid-cols-[repeat(6,35px)] auto-rows-[35px]">
      {gallery.map((g, i) => (
        <div key={i} className="flex items-center justify-center"><svg width="23" height="23" viewBox="0 0 24 24">{g}</svg></div>
      ))}
    </div>
    <div className="h-[30px] pl-[15px] flex items-center gap-[4px]">
      <span className="w-[3px] h-[3px] rounded-full bg-[#323130]" /><span className="w-[3px] h-[3px] rounded-full bg-[#323130]" /><span className="w-[3px] h-[3px] rounded-full bg-[#323130]" />
    </div>
    <div className="mt-[10px] h-[1px] bg-[#e1dfdd]" />
    <div className="mt-[12px] h-[18px] pl-[15px] leading-[18px] text-[13.5px] text-[#3b3a39]">Values</div>
    <div className="mt-[7px] ml-[5px] w-[213px] h-[35px] bg-white border border-dashed border-[#c8c6c4] flex items-center pl-[12px] text-[14px] text-[#323130] whitespace-nowrap">Add data fields here</div>
    <div className="mt-[15px] h-[18px] pl-[15px] leading-[18px] text-[13.5px] font-semibold text-[#484644]">Drill through</div>
    <div className="mt-[12px] h-[20px] pl-[15px] flex items-center justify-between w-[198px] text-[14px] text-[#3b3a39]"><span>Cross-report</span><Toggle /></div>
    <div className="mt-[14px] h-[20px] pl-[15px] flex items-center justify-between w-[198px] text-[14px] text-[#3b3a39]"><span>Keep all filters</span><Toggle on /></div>
    <div className="mt-[13px] ml-[5px] w-[213px] h-[32px] bg-white border border-dashed border-[#c8c6c4] flex items-center pl-[10px] text-[14px] text-[#323130] whitespace-nowrap">Add drill-through fields here</div>
  </div>
);

const fields = [
  ["Age", 1], ["Credit_Amount", 1], ["Credit_History"], ["Credit_Risk"], ["Customer_ID"], ["Duration_Mon...", 1],
  ["Employment"], ["Foreign_Worker"], ["Housing"], ["Installment_R...", 1], ["Job"], ["Number_Cred...", 1],
  ["Other_Debtor..."], ["Other_Install..."], ["People_Maint...", 1], ["Personal_Stat..."], ["Present_Resid...", 1],
  ["Property"], ["Purpose"], ["Savings_Acco..."], ["Status_Checki..."], ["Telephone"],
];

const Data = () => (
  <div className="relative w-[220px] shrink-0 bg-[#f3f2f1] flex flex-col overflow-hidden">
    <div className="h-[50px] flex items-center justify-between pl-[11px] pr-[5px]">
      <span className="text-[17.5px] font-semibold text-[#252423]">Data</span>
      <svg width="17" height="16" viewBox="0 0 17 16"><path d="M2 1L9 8L2 15M8.5 1L15.5 8L8.5 15" fill="none" stroke="#252423" strokeWidth="1.3" /></svg>
    </div>
    <div className="mt-[8px] ml-[6px] w-[213px] h-[29px] bg-white border border-[#c8c6c4] rounded-[4px] flex items-center pl-[14px]">
      <svg width="18" height="18" viewBox="0 0 18 18"><circle cx="7.5" cy="7.5" r="5.8" fill="none" stroke="#605e5c" strokeWidth="1.3" /><path d="M12 12L17 17" stroke="#605e5c" strokeWidth="1.3" /></svg>
      <span className="ml-[8px] text-[16px] text-[#605e5c]">Search</span>
    </div>
    <div className="mt-[2px] h-[29px] flex items-center pl-[16px] text-[14px] text-[#3b3a39] whitespace-nowrap">
      <svg width="14" height="9" viewBox="0 0 14 9"><path d="M1 1L7 7L13 1" fill="none" stroke="#605e5c" strokeWidth="1.1" /></svg>
      <svg width="15" height="14" viewBox="0 0 15 14" className="ml-[6px]"><path d="M1.5 1.5V12.5H13.5V1.5M0.5 5H14.5M0.5 9H14.5M5.5 0.5V13M9.5 0.5V13" fill="none" stroke="#484644" strokeWidth="1.2" /></svg>
      <span className="ml-[8px]">credit_data_for_pow...</span>
    </div>
    {fields.map(([name, sigma]) => (
      <div key={name} className="h-[30px] shrink-0 flex items-center pl-[55px] text-[14px] text-[#3b3a39] whitespace-nowrap">
        <span className="w-[15px] h-[15px] rounded-[2px] border border-[#8a8886] bg-[#f8f8f7]" />
        <span className="w-[33px] pl-[11px] flex">
          {sigma && <svg width="13" height="14" viewBox="0 0 13 14"><path d="M12 1.5V0.8H1L6.5 7L1 13.2H12V12.5" fill="none" stroke="#484644" strokeWidth="1.1" /></svg>}
        </span>
        <span>{name}</span>
      </div>
    ))}
    <div className="absolute right-0 top-[107px] bottom-0 w-[10px] bg-[#8a8886]" />
  </div>
);

export default function App() {
  return (
    <div className="w-[1911px] h-[974px] flex flex-col overflow-hidden bg-white font-['Open_Sans',sans-serif]">
      <TitleBar />
      <Ribbon />
      <div className="flex flex-1 min-h-0">
        <Rail />
        <div className="w-[1376px] shrink-0 flex flex-col">
          <div className="flex-1 min-h-0 bg-white"><Report /></div>
          <Bottom />
        </div>
        <Filters />
        <Viz />
        <Data />
      </div>
    </div>
  );
}
